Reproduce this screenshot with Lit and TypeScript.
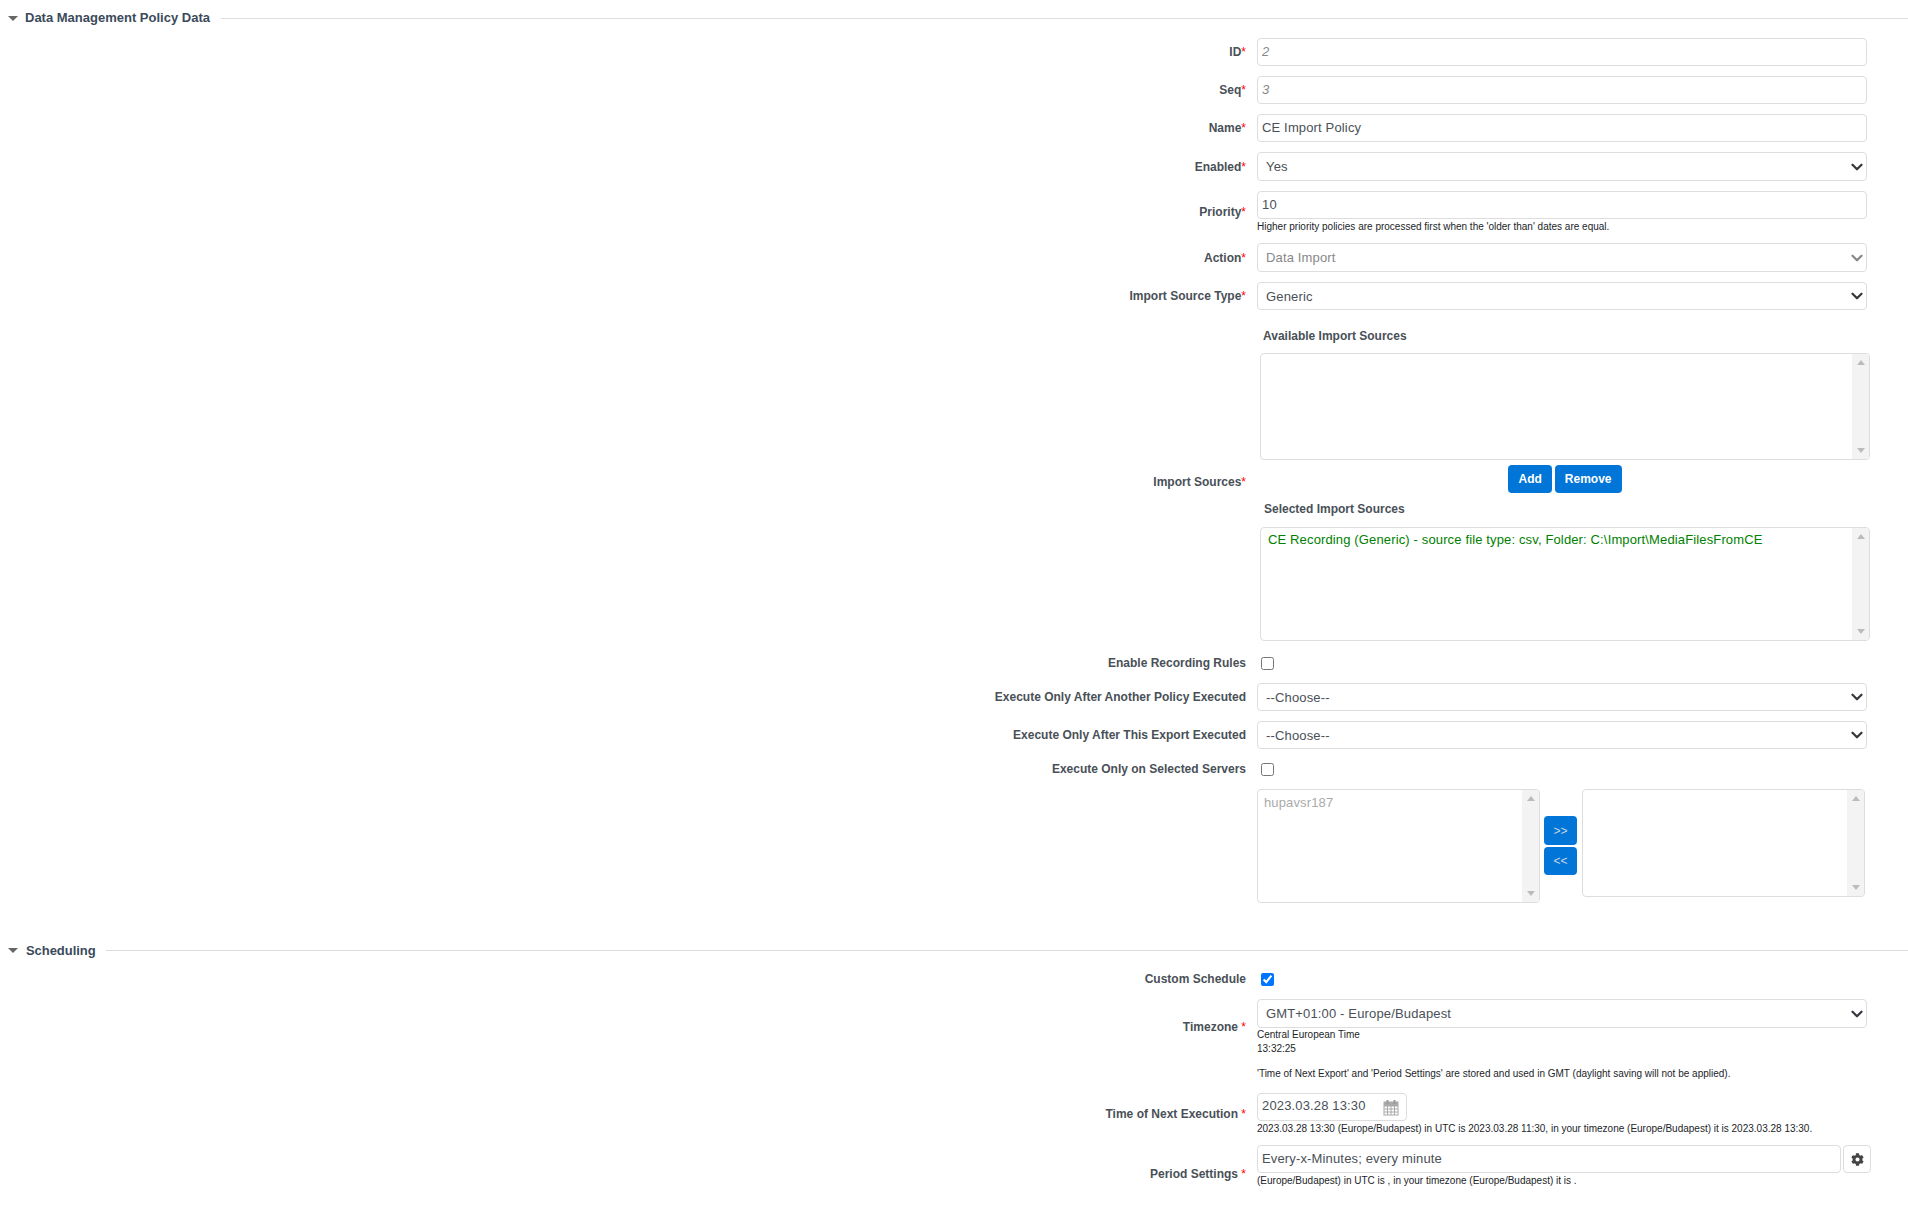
import { LitElement, html, css, svg } from "lit";
import { customElement } from "lit/decorators.js";

const chevron = (c: string) =>
  `url("data:image/svg+xml,%3csvg xmlns='http://www.w3.org/2000/svg' viewBox='0 0 16 16'%3e%3cpath fill='none' stroke='${c}' stroke-linecap='round' stroke-linejoin='round' stroke-width='3' d='m2 5 6 6 6-6'/%3e%3c/svg%3e")`;

@customElement("app-root")
export class AppRoot extends LitElement {
  static styles = css`
    :host { display: block; height: 1210px; overflow: hidden; background: #fff; font-family: "Liberation Sans", Arial, sans-serif; color: #495057; font-size: 13px; }
    .page { display: flex; flex-direction: column; padding-top: 7px; }
    .head { display: flex; align-items: center; height: 22px; padding-left: 8px; font-weight: bold; font-size: 13px; color: #3b4a5a; }
    .head span { padding-bottom: 2px; }
    .head .tri { width: 0; height: 0; border-left: 5px solid transparent; border-right: 5px solid transparent; border-top: 5px solid #666; margin-right: 7px; margin-top: 1px; }
    .head .line { flex: 1; height: 1px; background: #ddd; margin-left: 11px; margin-top: 1px; }
    .form { display: flex; flex-direction: column; gap: 10px; padding-top: 9px; }
    .form.sched { padding-top: 8px; }
    .sec2 { margin-top: 36px; }
    .sec2 span { padding-left: 1px; padding-bottom: 0; letter-spacing: -0.05px; }
    .sec2 .line { margin-left: 10px; margin-top: 0; }
    .row { display: flex; align-items: center; }
    .lbl { width: 1246px; text-align: right; font-weight: bold; font-size: 12px; line-height: 16px; color: #495057; flex: none; }
    .lbl i { font-style: normal; font-weight: normal; color: #f00; }
    .ctl { width: 610px; margin-left: 11px; flex: none; }
    .field { display: block; box-sizing: border-box; width: 100%; height: 28px; border: 1px solid #ddd; border-radius: 4px; padding: 0 4px 2px; font: 13px "Liberation Sans", Arial, sans-serif; letter-spacing: 0.15px; color: #495057; background: #fff; outline: none; margin: 0; }
    .field.ro { font-style: italic; color: #888; }
    select.field { appearance: none; -webkit-appearance: none; padding: 0 20px 0 8px; background-repeat: no-repeat; background-position: right 3px center; background-size: 12px 12px; height: 29px; }
    select.h28 { height: 28px; }
    select.dis { color: #888; }
    .hint { font-size: 10px; line-height: 14px; color: #212529; }
    .hint.low { padding-top: 1px; margin-bottom: -1px; }
    .gapped { margin-top: 11px; padding-bottom: 2px; }
    .check-row { height: 20px; }
    .first-check { margin-top: 2px; }
    .check { display: block; width: 13px; height: 13px; margin: 0 0 0 4px; accent-color: #0075ff; }
    .sources { width: 610px; margin-left: 14px; display: flex; flex-direction: column; }
    .cap { font-weight: bold; font-size: 12px; line-height: 16px; color: #495057; margin-left: 3px; }
    .cap.one { margin-top: 8px; }
    .cap.two { margin-top: 8px; margin-left: 4px; }
    .box { box-sizing: border-box; border: 1px solid #ddd; border-radius: 4px; display: flex; overflow: hidden; background: #fff; }
    .box .body { flex: 1; min-width: 0; padding: 4px 6px; line-height: 16px; font-size: 13px; letter-spacing: 0.14px; }
    .bar { width: 17px; background: #f3f3f3; display: flex; flex-direction: column; justify-content: space-between; align-items: center; padding: 6px 0; flex: none; }
    .up { width: 0; height: 0; border-left: 4px solid transparent; border-right: 4px solid transparent; border-bottom: 5px solid #bbb; }
    .dn { width: 0; height: 0; border-left: 4px solid transparent; border-right: 4px solid transparent; border-top: 5px solid #bbb; }
    .avail { height: 107px; margin-top: 9px; }
    .sel { height: 114px; margin-top: 10px; }
    .sel .body { color: #008000; padding: 4px 7px; }
    .acts { display: flex; justify-content: center; gap: 3px; margin-top: 5px; }
    .btn { box-sizing: border-box; border: none; border-radius: 4px; background: #0275d8; color: #fff; font: bold 12px "Liberation Sans", Arial, sans-serif; height: 28px; padding: 0 10px; margin: 0; }
    .dual { display: flex; align-items: flex-start; margin-left: 11px; }
    .dual .left { width: 283px; height: 114px; }
    .dual .left .body { color: #aaa; padding: 5px 6px; }
    .dual .right { width: 283px; height: 108px; margin-left: 5px; }
    .mv { display: flex; flex-direction: column; gap: 2px; margin: 27px 0 0 4px; }
    .mv .btn { width: 33px; height: 28px; padding: 0; font-weight: normal; font-size: 12px; color: #ccd6e0; }
    .mv .btn.tall { height: 29px; }
    .top { align-self: flex-start; }
    .tz-l { margin-top: 20px; }
    .pd-l { margin-top: 21px; }
    .src-l { padding-top: 3px; }
    .date { box-sizing: border-box; width: 150px; height: 28px; border: 1px solid #ddd; border-radius: 4px; display: flex; align-items: center; justify-content: space-between; padding: 0 7px 0 4px; line-height: 24px; letter-spacing: 0.15px; }
    .date span { padding-bottom: 2px; }
    .period { display: flex; gap: 2px; width: 614px; }
    .period .field { width: 584px; flex: none; }
    .gear { box-sizing: border-box; width: 28px; height: 28px; border: 1px solid #ddd; border-radius: 4px; display: flex; align-items: center; justify-content: center; flex: none; }
    .gear svg, .date svg { display: block; }
  `;

  private lbl(text: string, extra = "") {
    return html`<div class="lbl ${extra}">${text}<i>*</i></div>`;
  }
  private lbls(text: string, extra = "") {
    return html`<div class="lbl ${extra}">${text} <i>*</i></div>`;
  }
  private plain(text: string) {
    return html`<div class="lbl">${text}</div>`;
  }
  private select(value: string, cls = "", color = "#343a40") {
    return html`<select class="field ${cls}" style="background-image:${chevron(color.replace("#", "%23"))}"><option>${value}</option></select>`;
  }
  private bar() {
    return html`<div class="bar"><div class="up"></div><div class="dn"></div></div>`;
  }
  private head(text: string, cls = "") {
    return html`<div class="head ${cls}"><div class="tri"></div><span>${text}</span><div class="line"></div></div>`;
  }

  render() {
    const cal = svg`<rect x="1" y="3" width="14" height="13" fill="#fff" stroke="#aaa"/><path d="M1 7h14M1 10h14M1 13h14M4.5 7v9M8 7v9M11.5 7v9" stroke="#aaa" stroke-width="1" fill="none"/><rect x="1" y="3" width="14" height="4" fill="#aaa"/><rect x="3.5" y="1" width="2" height="4" fill="#999"/><rect x="10.5" y="1" width="2" height="4" fill="#999"/>`;
    return html`
      <div class="page">
        ${this.head("Data Management Policy Data")}
        <div class="form">
          <div class="row">${this.lbl("ID")}<div class="ctl"><input class="field ro" readonly .value=${"2"} /></div></div>
          <div class="row">${this.lbl("Seq")}<div class="ctl"><input class="field ro" readonly .value=${"3"} /></div></div>
          <div class="row">${this.lbl("Name")}<div class="ctl"><input class="field" .value=${"CE Import Policy"} /></div></div>
          <div class="row">${this.lbl("Enabled")}<div class="ctl">${this.select("Yes")}</div></div>
          <div class="row">${this.lbl("Priority")}<div class="ctl"><input class="field" .value=${"10"} /><div class="hint low">Higher priority policies are processed first when the 'older than' dates are equal.</div></div></div>
          <div class="row">${this.lbl("Action")}<div class="ctl">${this.select("Data Import", "dis", "#888888")}</div></div>
          <div class="row">${this.lbl("Import Source Type")}<div class="ctl">${this.select("Generic", "h28")}</div></div>
          <div class="row">
            ${this.lbl("Import Sources", "src-l")}
            <div class="sources">
              <div class="cap one">Available Import Sources</div>
              <div class="box avail"><div class="body"></div>${this.bar()}</div>
              <div class="acts"><button class="btn">Add</button><button class="btn">Remove</button></div>
              <div class="cap two">Selected Import Sources</div>
              <div class="box sel"><div class="body">CE Recording (Generic) - source file type: csv, Folder: C:\\Import\\MediaFilesFromCE</div>${this.bar()}</div>
            </div>
          </div>
          <div class="row check-row first-check">${this.plain("Enable Recording Rules")}<div class="ctl"><input type="checkbox" class="check" /></div></div>
          <div class="row">${this.plain("Execute Only After Another Policy Executed")}<div class="ctl">${this.select("--Choose--", "h28")}</div></div>
          <div class="row">${this.plain("Execute Only After This Export Executed")}<div class="ctl">${this.select("--Choose--", "h28")}</div></div>
          <div class="row check-row">${this.plain("Execute Only on Selected Servers")}<div class="ctl"><input type="checkbox" class="check" /></div></div>
          <div class="row">
            <div class="lbl"></div>
            <div class="dual">
              <div class="box left"><div class="body">hupavsr187</div>${this.bar()}</div>
              <div class="mv"><button class="btn tall">&gt;&gt;</button><button class="btn">&lt;&lt;</button></div>
              <div class="box right"><div class="body"></div>${this.bar()}</div>
            </div>
          </div>
        </div>
        ${this.head("Scheduling", "sec2")}
        <div class="form sched">
          <div class="row check-row">${this.plain("Custom Schedule")}<div class="ctl"><input type="checkbox" class="check" checked /></div></div>
          <div class="row">
            ${this.lbls("Timezone", "top tz-l")}
            <div class="ctl">
              ${this.select("GMT+01:00 - Europe/Budapest")}
              <div class="hint">Central European Time</div>
              <div class="hint">13:32:25</div>
              <div class="hint gapped">'Time of Next Export' and 'Period Settings' are stored and used in GMT (daylight saving will not be applied).</div>
            </div>
          </div>
          <div class="row">
            ${this.lbls("Time of Next Execution")}
            <div class="ctl">
              <div class="date"><span>2023.03.28 13:30</span><svg width="16" height="17" viewBox="0 0 16 17">${cal}</svg></div>
              <div class="hint low">2023.03.28 13:30 (Europe/Budapest) in UTC is 2023.03.28 11:30, in your timezone (Europe/Budapest) it is 2023.03.28 13:30.</div>
            </div>
          </div>
          <div class="row">
            ${this.lbls("Period Settings", "top pd-l")}
            <div class="ctl">
              <div class="period">
                <input class="field" .value=${"Every-x-Minutes; every minute"} />
                <div class="gear"><svg width="13" height="13" viewBox="0 0 512 512"><path fill="#444" d="M487.4 315.7l-42.6-24.6c4.3-23.2 4.3-47 0-70.2l42.6-24.6c4.9-2.8 7.1-8.6 5.5-14-11.1-35.6-30-67.8-54.7-94.6-3.8-4.1-10-5.1-14.8-2.3L380.8 110c-17.9-15.4-38.5-27.3-60.8-35.1V25.8c0-5.6-3.9-10.5-9.4-11.7-36.7-8.2-74.3-7.8-109.2 0-5.5 1.2-9.4 6.1-9.4 11.7V75c-22.2 7.9-42.8 19.8-60.8 35.1L88.7 85.5c-4.9-2.8-11-1.9-14.8 2.3-24.7 26.7-43.6 58.9-54.7 94.6-1.7 5.4.6 11.2 5.5 14L67.3 221c-4.3 23.2-4.3 47 0 70.2l-42.6 24.6c-4.9 2.8-7.1 8.6-5.5 14 11.1 35.6 30 67.8 54.7 94.6 3.8 4.1 10 5.1 14.8 2.3l42.6-24.6c17.9 15.4 38.5 27.3 60.8 35.1v49.2c0 5.6 3.9 10.5 9.4 11.7 36.7 8.2 74.3 7.8 109.2 0 5.5-1.2 9.4-6.1 9.4-11.7v-49.2c22.2-7.9 42.8-19.8 60.8-35.1l42.6 24.6c4.9 2.8 11 1.9 14.8-2.3 24.7-26.7 43.6-58.9 54.7-94.6 1.5-5.5-.7-11.3-5.6-14.1zM256 336c-44.1 0-80-35.9-80-80s35.9-80 80-80 80 35.9 80 80-35.9 80-80 80z"/></svg></div>
              </div>
              <div class="hint low">(Europe/Budapest) in UTC is , in your timezone (Europe/Budapest) it is .</div>
            </div>
          </div>
        </div>
      </div>
    `;
  }
}
